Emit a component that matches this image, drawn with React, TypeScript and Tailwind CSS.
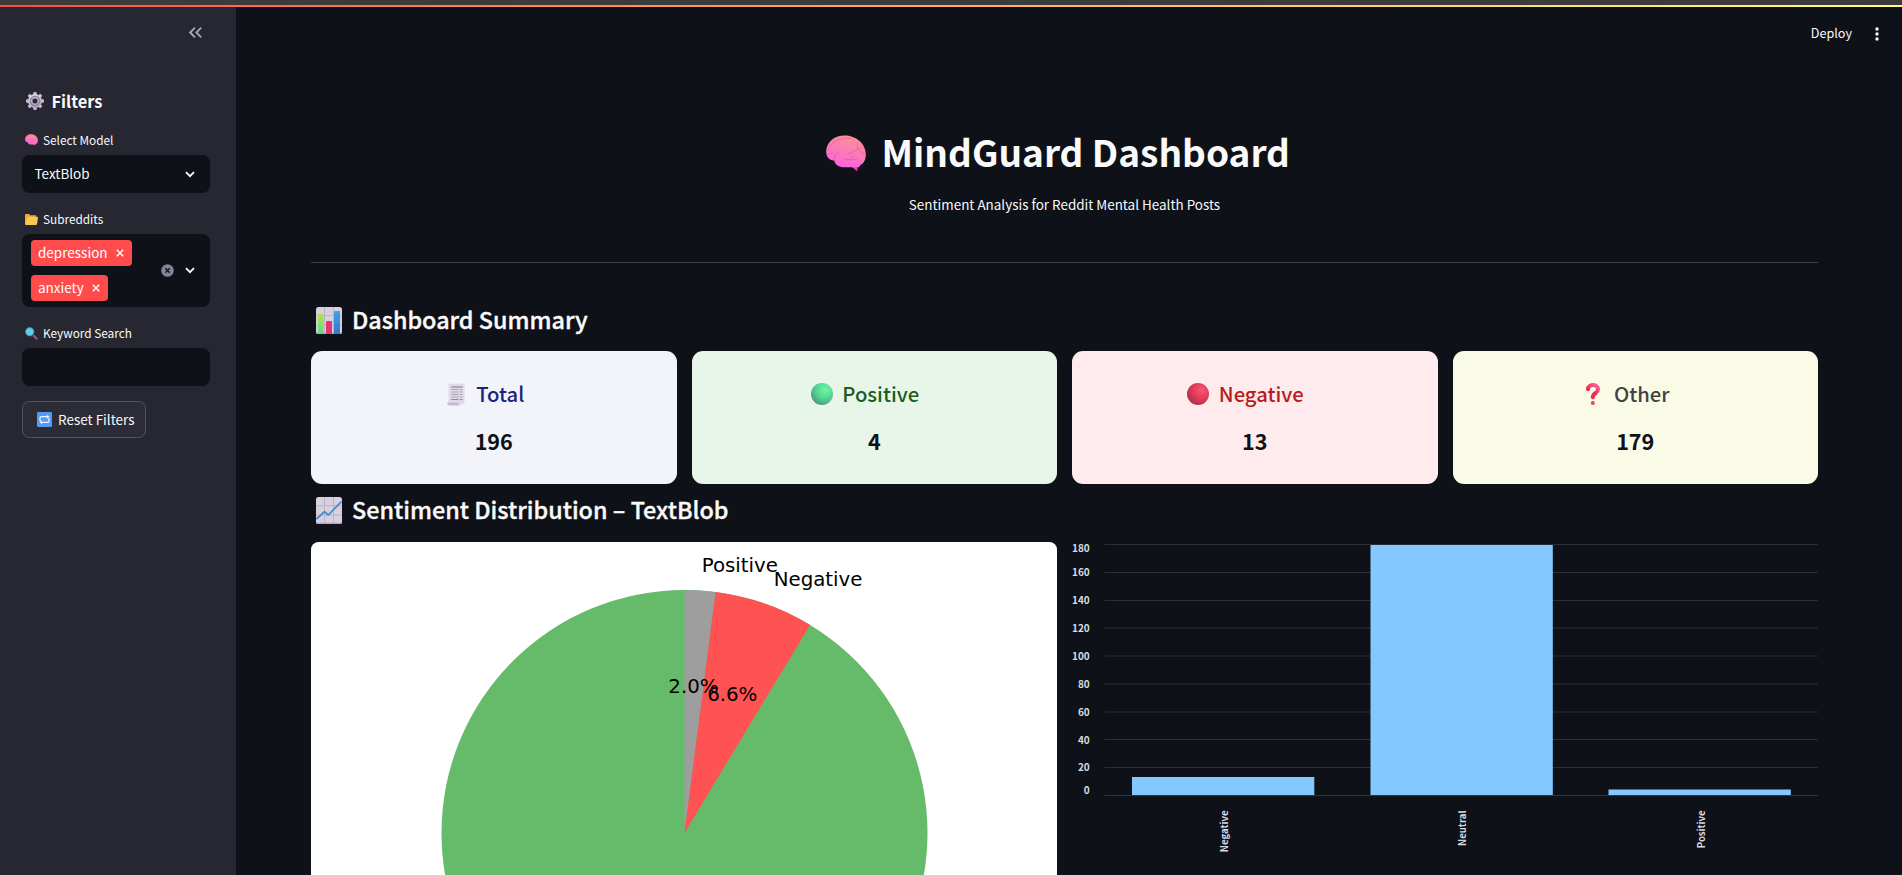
import React from "react";

type IconProps = { className?: string };

function BrainIcon({ className }: IconProps) {
  return (
    <svg viewBox="0 0 40 37" className={className}>
      <defs>
        <linearGradient id="brain" x1="0.65" y1="0" x2="0.35" y2="1">
          <stop offset="0" stopColor="#fd9096" />
          <stop offset="0.55" stopColor="#fc78bc" />
          <stop offset="1" stopColor="#fb62e0" />
        </linearGradient>
      </defs>
      <path d="M24 31 Q28.500 33 31 36.500 L32 30 Z" fill="#ee3fb0" />
      <path
        d="M18.500 0.500 C9 0.500 1 6.500 0.300 15 C-0.300 21 2 25 8 25.500 C9.500 30 13 32.300 18 32.300 L31 32.300 C33 32.300 33.800 31.500 34.300 30 C37.500 28.500 40 25 39.800 19 C39.600 8.500 30 0.500 18.500 0.500 Z"
        fill="url(#brain)"
      />
      <g fill="none" stroke="#c9508c" strokeWidth="0.9" strokeLinecap="round" opacity="0.5">
        <path d="M2.500 15 C4 9 9 5 15 4.500 C17 2 21 4.500 25 3" />
        <path d="M2 19.500 C4 20 5 18 7 17.500" />
        <path d="M8.500 25 C8 21 10 17.500 14 16.500" />
        <path d="M22 18.500 C26 18.500 29 16 32 14 C34 12.500 35 12.500 37 12.500" />
        <path d="M32 14 C33.500 16.500 36.500 17 38 19.500" />
        <path d="M19 24.500 C22 23.500 25 26 31 24 M26.500 24.500 C26 23 26.500 22 27.500 21" />
        <path d="M31.500 13.500 C31 11 31.500 9 32 7.500" />
      </g>
    </svg>
  );
}

function GearIcon({ className }: IconProps) {
  const teeth = [0, 45, 90, 135, 180, 225, 270, 315];
  return (
    <svg viewBox="-9 -9 18 18" className={className}>
      <defs>
        <linearGradient id="gear" x1="0" y1="0" x2="0.4" y2="1">
          <stop offset="0" stopColor="#dcd5e4" />
          <stop offset="1" stopColor="#b6a8c8" />
        </linearGradient>
      </defs>
      {teeth.map((a) => (
        <rect key={a} x="-1.700" y="-9" width="3.400" height="4.500" rx="1" fill="#c6bad4" transform={`rotate(${a})`} />
      ))}
      <circle r="5" fill="none" stroke="url(#gear)" strokeWidth="4" />
      <circle r="4.600" fill="none" stroke="#8c8298" strokeWidth="1.300" />
      <circle r="2.900" fill="none" stroke="#d4cbde" strokeWidth="0.600" />
    </svg>
  );
}

function FolderIcon({ className }: IconProps) {
  return (
    <svg viewBox="0 0 13 11" className={className}>
      <path d="M0 1 Q0 0 1 0 H4 L5 1.300 H10.500 Q11.500 1.300 11.500 2.300 V10 H0 Z" fill="#f0a928" />
      <path d="M2.200 3.700 Q2.400 2.900 3.200 2.900 H12.300 Q13.200 2.900 13 3.800 L12 10 Q11.800 11 10.800 11 H0.800 Q0 11 0.200 10 Z" fill="#ffc553" />
    </svg>
  );
}

function MagnifierIcon({ className }: IconProps) {
  return (
    <svg viewBox="0 0 13 13" className={className}>
      <path d="M8.600 8.600 L11.700 11.700" stroke="#85508f" strokeWidth="2.300" strokeLinecap="round" />
      <circle cx="4.700" cy="4.700" r="4.200" fill="#5fcdee" stroke="#4585a8" strokeWidth="0.900" />
    </svg>
  );
}

function RepeatIcon({ className }: IconProps) {
  return (
    <svg viewBox="0 0 15 15" className={className}>
      <rect width="15" height="15" rx="1.200" fill="#4f9bf5" />
      <g fill="none" stroke="#eef1fb" strokeWidth="1.300">
        <path d="M3 9 V6 Q3 4.700 4.300 4.700 H10.500" />
        <path d="M12 6 V9 Q12 10.300 10.700 10.300 H4.500" />
      </g>
      <path d="M9.800 2.700 L12.600 4.700 L9.800 6.700 Z M5.200 8.300 L2.400 10.300 L5.200 12.300 Z" fill="#eef1fb" />
    </svg>
  );
}

function GridTile() {
  return (
    <>
      <rect width="26" height="27" rx="2.500" fill="#d8d0de" />
      <path d="M8.500 0 V27 M17.500 0 V27 M0 8.700 H26 M0 18 H26" stroke="#b9afc0" strokeWidth="0.900" />
      <path d="M0.500 26.300 H25.500" stroke="#b59fcb" strokeWidth="1.200" />
    </>
  );
}

function BarChartIcon({ className }: IconProps) {
  return (
    <svg viewBox="0 0 26 27" className={className}>
      <defs>
        <linearGradient id="barGreen" x1="0" y1="0" x2="0" y2="1">
          <stop offset="0" stopColor="#b4e052" />
          <stop offset="1" stopColor="#5cd98c" />
        </linearGradient>
        <linearGradient id="barBlue" x1="0" y1="0" x2="0" y2="1">
          <stop offset="0" stopColor="#38a5f5" />
          <stop offset="1" stopColor="#3c74c4" />
        </linearGradient>
      </defs>
      <GridTile />
      <path d="M2 7 H7.500 V27 H2.500 Q2 27 2 26 Z" fill="url(#barGreen)" />
      <path d="M10 15 Q10 14 11 14 H15 Q16 14 16 15 V27 H10 Z" fill="#e8356f" />
      <path d="M18 5 Q18 4 19 4 H24 V26 Q24 27 23 27 H18 Z" fill="url(#barBlue)" />
    </svg>
  );
}

function LineChartIcon({ className }: IconProps) {
  return (
    <svg viewBox="0 0 26 27" className={className}>
      <GridTile />
      <path d="M0.500 22 L8.500 14.700 L12.300 18 L25.500 4.500" fill="none" stroke="#3a8bd2" strokeWidth="1.700" strokeLinejoin="round" />
    </svg>
  );
}

function ReceiptIcon({ className }: IconProps) {
  return (
    <svg viewBox="0 0 18 23" className={className}>
      <path d="M1.500 1 L2.600 0.200 L3.700 1 L4.800 0.200 L6 1 L7.200 0.200 L8.400 1 L9.600 0.200 L10.800 1 L12 0.200 L13.200 1 L14.400 0.200 L15.600 1 L16.700 0.200 L17.500 1 V19.500 Q17.500 21.500 15.500 21.500 H1.500 Z" fill="#dfdae6" />
      <path d="M0 19.500 H11.500 Q11.500 22.500 14.500 22.500 H2.500 Q0.300 22.500 0 19.500 Z" fill="#c9b8de" />
      <path d="M4.300 4 H15.500" stroke="#8e8899" strokeWidth="1.200" />
      <path d="M4.300 6.500 H11.500 M12.700 6.500 H15.500 M4.300 9 H11.500 M12.700 9 H15.500 M4.300 11.500 H11.500 M12.700 11.500 H15.500 M4.300 14 H11.500 M12.700 14 H15.500" stroke="#aaa4b4" strokeWidth="1.200" />
      <path d="M4.300 16.500 H11.500 M12.700 16.500 H15.500" stroke="#8e8899" strokeWidth="1.200" />
    </svg>
  );
}

function GreenBall({ className }: IconProps) {
  return (
    <svg viewBox="0 0 22 22" className={className}>
      <defs>
        <radialGradient id="green" cx="0.65" cy="0.3" r="0.75">
          <stop offset="0" stopColor="#6cf9a4" />
          <stop offset="0.55" stopColor="#54d491" />
          <stop offset="1" stopColor="#4a978a" />
        </radialGradient>
      </defs>
      <circle cx="11" cy="11" r="11" fill="url(#green)" />
    </svg>
  );
}

function RedBall({ className }: IconProps) {
  return (
    <svg viewBox="0 0 22 22" className={className}>
      <defs>
        <radialGradient id="red" cx="0.68" cy="0.32" r="0.75">
          <stop offset="0" stopColor="#fb5474" />
          <stop offset="0.55" stopColor="#e03c58" />
          <stop offset="1" stopColor="#a92f50" />
        </radialGradient>
      </defs>
      <circle cx="11" cy="11" r="11" fill="url(#red)" />
    </svg>
  );
}

function QuestionIcon({ className }: IconProps) {
  return (
    <svg viewBox="0 0 14 22" className={className}>
      <defs>
        <linearGradient id="question" x1="0.8" y1="0" x2="0.2" y2="1">
          <stop offset="0" stopColor="#f8609c" />
          <stop offset="0.6" stopColor="#f02850" />
          <stop offset="1" stopColor="#f0344c" />
        </linearGradient>
      </defs>
      <path d="M2 6.300 C2 0.500 12 0.500 12 6.300 C12 10.500 7 9.500 6.800 14.300" fill="none" stroke="url(#question)" strokeWidth="4" strokeLinecap="round" />
      <circle cx="6.800" cy="20" r="2" fill="#f5405a" />
    </svg>
  );
}

function Chevron({ className }: IconProps) {
  return (
    <svg viewBox="0 0 10 7" className={className}>
      <path d="M1 1.200 L5 5.200 L9 1.200" fill="none" stroke="#fafafa" strokeWidth="1.900" />
    </svg>
  );
}

function Label({ icon, children, className }: { icon: React.ReactNode; children: React.ReactNode; className: string }) {
  return (
    <div className={`flex items-center pl-[3px] text-[11.800px] leading-5 ${className}`}>
      <span className="flex w-[18px] shrink-0">{icon}</span>
      {children}
    </div>
  );
}

function Chip({ children }: { children: React.ReactNode }) {
  return (
    <span className="flex h-[26px] items-center gap-[8.500px] rounded-[4px] bg-[#ff4b4b] pr-2 pl-[7px] text-[13.500px] text-white">
      <span className="pb-px">{children}</span>
      <svg viewBox="0 0 8 8" className="size-2">
        <path d="M0.800 0.800 L7.200 7.200 M7.200 0.800 L0.800 7.200" stroke="#fff" strokeWidth="1.500" />
      </svg>
    </span>
  );
}

function Sidebar() {
  return (
    <aside className="flex w-[236px] shrink-0 flex-col bg-[#262730] px-[22px] pr-[26px]">
      <div className="flex h-[42px] items-center justify-end pt-[9px] pr-2">
        <svg viewBox="0 0 13 11" className="h-[11px] w-[13px]">
          <path d="M6 0.700 L1.200 5.500 L6 10.300 M12.200 0.700 L7.400 5.500 L12.200 10.300" fill="none" stroke="#a6a7ac" strokeWidth="1.900" />
        </svg>
      </div>
      <h2 className="mt-10 flex h-6 items-center gap-[7.500px] pl-1 text-[16.400px] font-bold">
        <GearIcon className="size-[18px]" />
        Filters
      </h2>
      <Label className="mt-[17px]" icon={<BrainIcon className="h-3 w-[13px]" />}>Select Model</Label>
      <div className="mt-[5px] flex h-[38px] items-center justify-between rounded-[7.500px] bg-[#0e1117] pr-[15px] pl-[12.500px] text-[13.500px]">
        <span className="pb-px">TextBlob</span>
        <Chevron className="h-[7px] w-2.5" />
      </div>
      <Label className="mt-4" icon={<FolderIcon className="h-[11px] w-[13px]" />}>Subreddits</Label>
      <div className="mt-[5px] flex h-[73px] items-center rounded-[7.500px] bg-[#0e1117] pr-[15px] pl-[9px]">
        <div className="flex flex-1 flex-col items-start gap-[9px]">
          <Chip>depression</Chip>
          <Chip>anxiety</Chip>
        </div>
        <svg viewBox="0 0 13 13" className="mr-[11.500px] size-[13px]">
          <circle cx="6.500" cy="6.500" r="6.300" fill="#808495" />
          <path d="M4.300 4.300 L8.700 8.700 M8.700 4.300 L4.300 8.700" stroke="#0e1117" strokeWidth="1.300" />
        </svg>
        <Chevron className="h-[7px] w-2.5" />
      </div>
      <Label className="mt-4" icon={<MagnifierIcon className="size-[13px]" />}>Keyword Search</Label>
      <div className="mt-[5px] h-[38px] rounded-[7.500px] bg-[#0e1117]" />
      <button className="mt-[15px] flex h-[37px] w-[124px] items-center gap-[6px] rounded-[7.500px] border border-[#53545c] bg-[#2b2c36] pl-3.5 text-[13.500px]">
        <RepeatIcon className="size-[15px] shrink-0" />
        <span className="whitespace-nowrap">Reset Filters</span>
      </button>
    </aside>
  );
}

function SummaryCard({ icon, label, value, className, labelClass }: { icon: React.ReactNode; label: string; value: string; className: string; labelClass: string }) {
  return (
    <div className={`flex h-[133px] flex-col items-center rounded-[11px] ${className}`}>
      <div className={`mt-[27px] flex h-8 items-center gap-[5.500px] pr-[22.500px] text-[20.250px] font-medium ${labelClass}`}>
        <span className="flex w-[30px] justify-center">{icon}</span>
        <span className="pt-px">{label}</span>
      </div>
      <div className="mt-[15px] h-8 text-[21.600px] leading-8 font-bold text-[#0e1117]">{value}</div>
    </div>
  );
}

function PieChart() {
  return (
    <svg viewBox="0 0 746 720" className="h-[720px] w-full">
      <circle cx="373.500" cy="291" r="243" fill="#66bb6a" />
      <path d="M373.500 291 L373.500 48 A243 243 0 0 1 404.600 50 Z" fill="#9e9e9e" />
      <path d="M373.500 291 L404.600 50 A243 243 0 0 1 499 82.900 Z" fill="#ff5252" />
      <g fill="#000" className="font-['DejaVu_Sans'] text-[19.800px]">
        <text x="390.700" y="30">Positive</text>
        <text x="462.700" y="44.300">Negative</text>
        <text x="382.500" y="151.400" textAnchor="middle">2.0%</text>
        <text x="421.300" y="159.400" textAnchor="middle">6.6%</text>
      </g>
    </svg>
  );
}

const ticks = [
  { label: "180", line: 2.5, text: 10.3 },
  { label: "160", line: 30.5, text: 34.3 },
  { label: "140", line: 58.5, text: 62.3 },
  { label: "120", line: 86, text: 90.3 },
  { label: "100", line: 114, text: 118.3 },
  { label: "80", line: 142, text: 146.3 },
  { label: "60", line: 170, text: 174.3 },
  { label: "40", line: 197.5, text: 202.3 },
  { label: "20", line: 225.5, text: 229.3 },
  { label: "0", line: 253.5, text: 252.3 },
];

const bars = [
  { label: "Negative", x: 60, y: 235, h: 18.5, mid: 152 },
  { label: "Neutral", x: 298.5, y: 3, h: 250.5, mid: 390.5 },
  { label: "Positive", x: 536.5, y: 247.5, h: 6, mid: 629 },
];

function BarChart() {
  return (
    <svg viewBox="0 0 746 333" className="h-[333px] w-[746px]">
      {ticks.map((t) => (
        <path key={t.label} d={`M32.500 ${t.line} H746`} stroke="#2b2e37" strokeWidth="1" />
      ))}
      {bars.map((b) => (
        <rect key={b.label} x={b.x} y={b.y} width="182.300" height={b.h} fill="#83c9ff" />
      ))}
      <path d="M32.500 253.500 H746" stroke="#31333f" strokeWidth="1" />
      <g fill="#d8dbe3" className="text-[10px] font-bold">
        {ticks.map((t) => (
          <text key={t.label} x="17.700" y={t.text} textAnchor="end">{t.label}</text>
        ))}
        {bars.map((b) => (
          <text key={b.label} transform={`translate(${b.mid + 3.7} 268.500) rotate(-90)`} textAnchor="end" className="text-[9.600px]">{b.label}</text>
        ))}
      </g>
    </svg>
  );
}

export default function App() {
  return (
    <div className="flex h-[875px] w-[1902px] flex-col overflow-hidden bg-[#0e1117] font-['Noto_Sans_CJK_SC',sans-serif] text-[#fafafa]">
      <div className="h-[5px] shrink-0 bg-[#3b3b3b]" />
      <div className="h-0.5 shrink-0 bg-linear-to-r from-[#ff4b4b] to-[#fffd80]" />
      <div className="flex min-h-0 flex-1">
        <Sidebar />
        <div className="flex min-w-0 flex-1 flex-col">
          <header className="flex h-[53px] shrink-0 items-center justify-end gap-[22.500px] pr-[23.500px] text-[12.600px]">
            <span className="pb-px">Deploy</span>
            <svg viewBox="0 0 4 14" className="h-3.5 w-1">
              <circle cx="2" cy="2" r="1.700" fill="#fafafa" />
              <circle cx="2" cy="7" r="1.700" fill="#fafafa" />
              <circle cx="2" cy="12" r="1.700" fill="#fafafa" />
            </svg>
          </header>
          <main className="flex min-h-0 flex-1 flex-col pr-[84px] pl-[75px]">
            <h1 className="mt-[66px] flex h-[52px] shrink-0 items-center justify-center gap-[15.500px] pr-[13px] text-[37px] font-bold">
              <BrainIcon className="mt-[2px] h-[37px] w-[40px]" />
              <span>MindGuard Dashboard</span>
            </h1>
            <p className="mt-[14px] mb-px h-6 shrink-0 text-center text-[13.450px] leading-6">
              Sentiment Analysis for Reddit Mental Health Posts
            </p>
            <hr className="mt-[45px] shrink-0 border-[#3e4044]" />
            <h2 className="mt-[39px] flex h-9 shrink-0 items-center gap-[10px] pl-[5px] text-[23.350px] font-medium [-webkit-text-stroke:0.35px_#fafafa]">
              <BarChartIcon className="h-[27px] w-[26px]" />
              <span>Dashboard Summary</span>
            </h2>
            <section className="mt-[13px] grid shrink-0 grid-cols-4 gap-[15px]">
              <SummaryCard icon={<ReceiptIcon className="h-[23px] w-[18px]" />} label="Total" value="196" className="bg-[#f3f4f9]" labelClass="text-[#1a237e]" />
              <SummaryCard icon={<GreenBall className="size-[22px]" />} label="Positive" value="4" className="bg-[#e8f5e9]" labelClass="text-[#1b5e20]" />
              <SummaryCard icon={<RedBall className="size-[22px]" />} label="Negative" value="13" className="bg-[#ffebee]" labelClass="text-[#b71c1c]" />
              <SummaryCard icon={<QuestionIcon className="h-[22px] w-[14px]" />} label="Other" value="179" className="bg-[#f9fbe7]" labelClass="text-[#424242]" />
            </section>
            <h2 className="mt-[8px] flex h-9 shrink-0 items-center gap-[10px] pl-[5px] text-[23.350px] font-medium [-webkit-text-stroke:0.35px_#fafafa]">
              <LineChartIcon className="h-[27px] w-[26px]" />
              <span>Sentiment Distribution – TextBlob</span>
            </h2>
            <section className="mt-[14px] flex min-h-0 flex-1 gap-[15px] overflow-hidden">
              <div className="w-[746px] shrink-0 overflow-hidden rounded-t-[7.500px] bg-white">
                <PieChart />
              </div>
              <BarChart />
            </section>
          </main>
        </div>
      </div>
    </div>
  );
}
